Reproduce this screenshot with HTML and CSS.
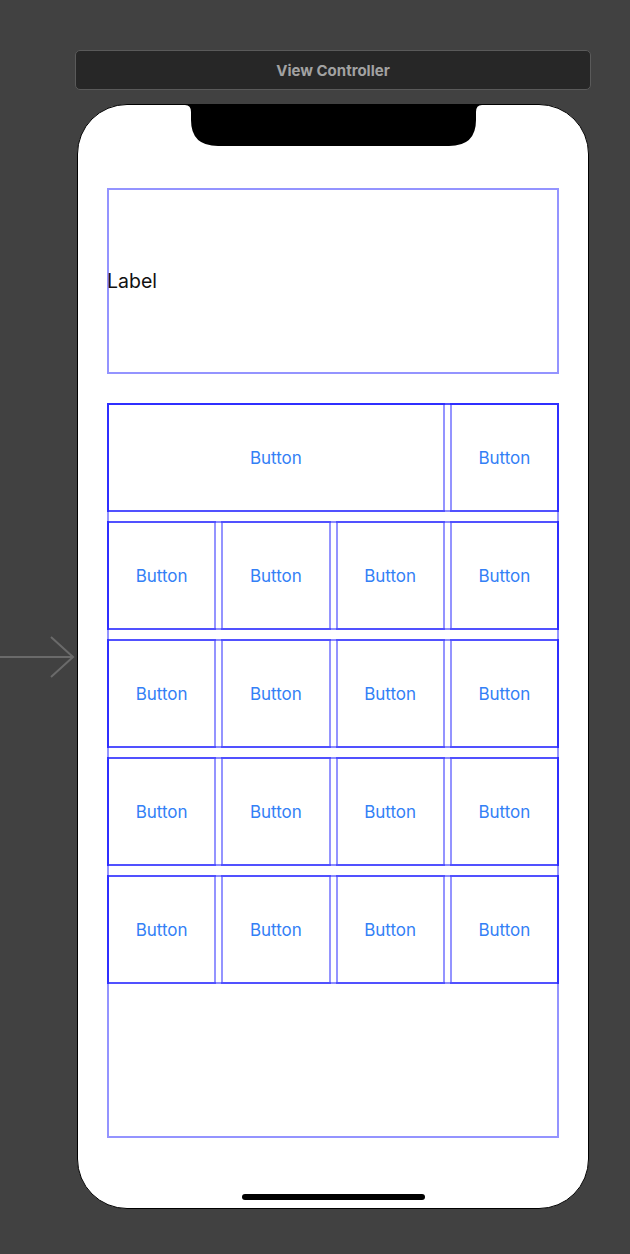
FILE: index.html
```html
<!DOCTYPE html>
<html lang="en">
  <head>
    <meta charset="UTF-8" />
    <meta name="viewport" content="width=device-width, initial-scale=1.0" />
    <title>View Controller</title>
    <link rel="stylesheet" href="styles.css">
  </head>
  <body>
    <div class="scene">
      <!-- entry point arrow -->
      <svg class="entry-arrow" width="76" height="44" viewBox="0 0 76 44">
        <path d="M0 21 H73 M51 1 L73 21 L51 41" fill="none" stroke="#6a6a6a" stroke-width="2" />
      </svg>

      <div class="title-bar">View Controller</div>

      <div class="phone">
        <svg class="notch" width="297" height="41" viewBox="0 0 297 41">
          <path d="M0 0 H297 Q291 0 291 7 V15 Q291 41 264 41 H33 Q6 41 6 15 V7 Q6 0 0 0 Z" fill="#000" />
        </svg>

        <div class="label-box">
          <span class="label">Label</span>
        </div>

        <div class="stack">
          <div class="row">
            <button class="btn wide">Button</button>
            <button class="btn">Button</button>
          </div>
          <div class="row">
            <button class="btn">Button</button>
            <button class="btn">Button</button>
            <button class="btn">Button</button>
            <button class="btn">Button</button>
          </div>
          <div class="row">
            <button class="btn">Button</button>
            <button class="btn">Button</button>
            <button class="btn">Button</button>
            <button class="btn">Button</button>
          </div>
          <div class="row">
            <button class="btn">Button</button>
            <button class="btn">Button</button>
            <button class="btn">Button</button>
            <button class="btn">Button</button>
          </div>
          <div class="row">
            <button class="btn">Button</button>
            <button class="btn">Button</button>
            <button class="btn">Button</button>
            <button class="btn">Button</button>
          </div>
        </div>

        <div class="home-bar"></div>
      </div>
    </div>
  </body>
</html>
```

FILE: styles.css
```css
* {
  box-sizing: border-box;
}
body {
  margin: 0;
  background: #414141;
  font-family: Inter, "Noto Sans", sans-serif;
}
.scene {
  position: relative;
  height: 1254px;
  padding: 50px 0 0 75px;
}
.entry-arrow {
  position: absolute;
  left: 0;
  top: 636px;
}
.title-bar {
  width: 516px;
  height: 40px;
  padding-top: 1px;
  background: #272727;
  border: 1px solid #5a5a5a;
  border-radius: 5px;
  color: #a2a2a2;
  font-size: 15px;
  font-weight: 700;
  display: flex;
  align-items: center;
  justify-content: center;
}
.phone {
  width: 512px;
  height: 1105px;
  margin: 14px 0 0 2px;
  background: #fff;
  border: 1px solid #000;
  border-radius: 50px;
  padding: 0 30px 8px;
  display: flex;
  flex-direction: column;
}
.notch {
  display: block;
  align-self: center;
  flex: none;
}
.label-box {
  margin-top: 43px;
  height: 184px;
  outline: 2px solid rgba(0, 0, 255, 0.42);
  outline-offset: -1px;
  display: flex;
  align-items: center;
  flex: none;
}
.label {
  margin-left: -1px;
  font-size: 19.5px;
  color: #111;
}
.stack {
  margin-top: 31px;
  height: 733px;
  outline: 2px solid rgba(0, 0, 255, 0.42);
  outline-offset: -1px;
  display: flex;
  flex-direction: column;
  gap: 11px;
  flex: none;
}
.row {
  height: 107px;
  outline: 2px solid rgba(0, 0, 255, 0.45);
  outline-offset: -1px;
  display: grid;
  grid-template-columns: repeat(4, 1fr);
  gap: 7px;
}
.btn {
  margin: 0;
  padding: 0;
  background: transparent;
  border: none;
  outline: 2px solid rgba(0, 0, 255, 0.42);
  outline-offset: -1px;
  font-family: Inter, "Noto Sans", sans-serif;
  font-size: 17px;
  color: #3380f6;
}
.btn.wide {
  grid-column: span 3;
}
.home-bar {
  margin-top: auto;
  align-self: center;
  width: 183px;
  height: 6px;
  border-radius: 3px;
  background: #000;
}
```
